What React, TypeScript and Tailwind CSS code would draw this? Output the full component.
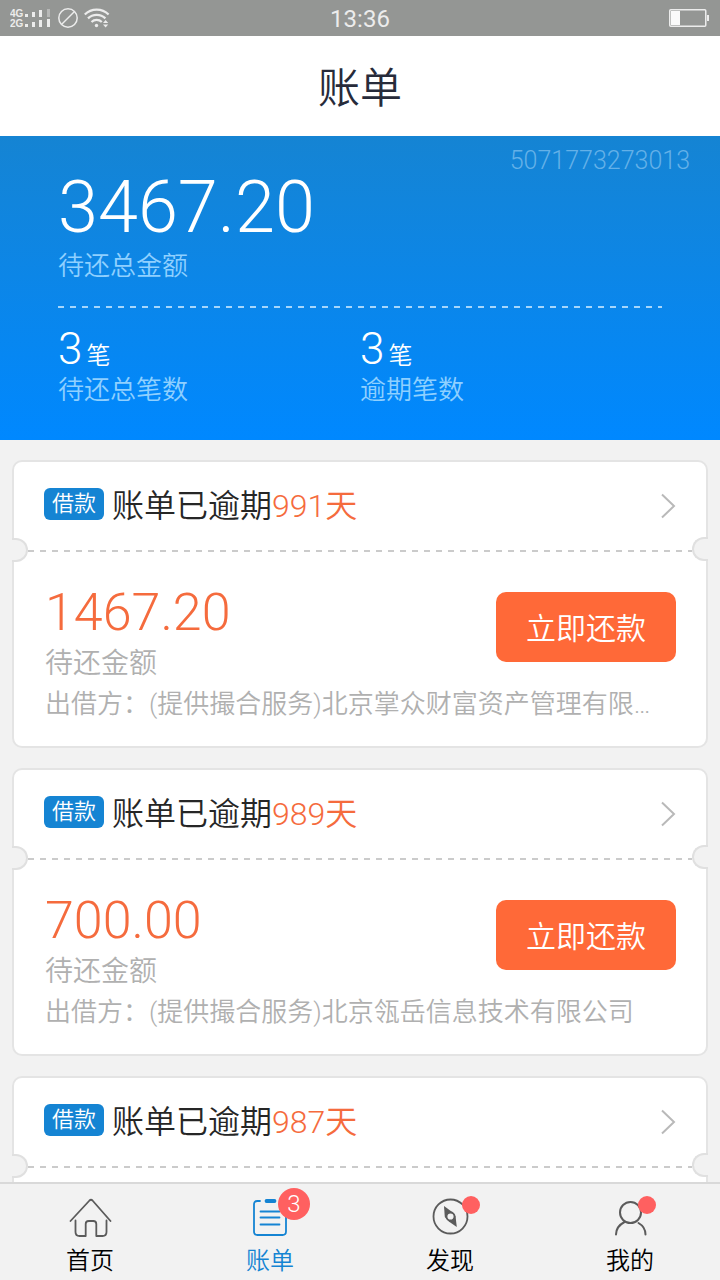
import React from 'react';

interface Bill {
  id: number;
  overdueDays: number;
  amount?: string;
  lender?: string;
}

const BILLS: Bill[] = [
  { id: 1, overdueDays: 991, amount: '1467.20', lender: '(提供撮合服务)北京掌众财富资产管理有限公司' },
  { id: 2, overdueDays: 989, amount: '700.00', lender: '(提供撮合服务)北京瓴岳信息技术有限公司' },
  { id: 3, overdueDays: 987 },
];

const StatusBar = () => (
  <div className="h-9 shrink-0 bg-[#949694] px-2.5 grid grid-cols-3 items-center text-[#ececec]">
    <div className="flex items-center gap-1.5">
      <svg width="42" height="20" viewBox="0 0 42 20" fill="currentColor">
        <text x="0" y="9" fontSize="10" fontWeight="700" fontFamily="Liberation Sans, sans-serif">4G</text>
        <text x="0" y="19" fontSize="10" fontWeight="700" fontFamily="Liberation Sans, sans-serif">2G</text>
        <path d="M15 6h3v3h-3zM22 4h3v5h-3zM29 2h3v7h-3zM15 16h3v3h-3zM22 14h3v5h-3zM29 12h3v7h-3zM37 11h3v8h-3z" />
        <path d="M37 1h3v8h-3z" opacity="0.4" />
      </svg>
      <svg width="20" height="20" viewBox="0 0 20 20" fill="none" stroke="currentColor" strokeWidth="1.5">
        <circle cx="10" cy="10" r="9.2" />
        <path d="M3.5 16.5l13-13" />
      </svg>
      <svg width="26" height="20" viewBox="0 0 26 20" fill="none" stroke="currentColor" strokeWidth="2.2">
        <path d="M0.8 6.5c6.5-6.6 17.2-6.6 23.8 0" />
        <path d="M4 10.4c4.8-4.8 12.6-4.8 17.4 0" />
        <path d="M7.5 14c2.9-2.8 7.4-2.8 10.3 0" />
        <circle cx="12.5" cy="17.5" r="1.7" fill="currentColor" stroke="none" />
        <path d="M19 15l2.6-3 2.6 3zM19 16.4h5.2l-2.6 3z" fill="currentColor" stroke="none" />
      </svg>
    </div>
    <span className="pt-0.5 text-center text-2xl font-normal">13:36</span>
    <svg className="justify-self-end" width="41" height="18" viewBox="0 0 41 18" fill="none">
      <rect x="0.75" y="0.75" width="36" height="16.5" rx="1" stroke="currentColor" strokeWidth="1.5" />
      <rect x="2" y="2" width="9" height="14" fill="#fafafa" />
      <rect x="38" y="6" width="2" height="6" fill="currentColor" />
    </svg>
  </div>
);

const Stat = ({ label, value }: { label: string, value: number }) => (
  <div>
    <p className="text-[44px] leading-[46px]">
      {value}
      <span className="ml-1 text-2xl leading-none">笔</span>
    </p>
    <p className="text-[26px] leading-9 text-[#8fd0ff]">{label}</p>
  </div>
);

const Summary = () => (
  <section className="h-76 shrink-0 bg-linear-to-b from-[#1584d3] to-[#0088ff] text-white">
    <div className="flex justify-between pl-[58px] pr-[30px] pt-3">
      <div className="pt-6">
        <p className="text-7xl">3467.20</p>
        <p className="mt-1 text-[26px] leading-9 text-[#8fd0ff]">待还总金额</p>
      </div>
      <span className="text-[25px] leading-[26px] text-[#64b1e8]">5071773273013</span>
    </div>
    <div className="mx-[58px] mt-[22px] h-0.5 bg-[repeating-linear-gradient(90deg,#a5d6fb_0_6px,transparent_6px_12px)]" />
    <div className="mx-[58px] mt-[18px] grid grid-cols-2">
      <Stat label="待还总笔数" value={3} />
      <Stat label="逾期笔数" value={3} />
    </div>
  </section>
);

const BillCard = ({ bill }: { bill: Bill }) => (
  <article className="min-h-72 shrink-0 rounded-[10px] border-2 border-[#e4e4e4] bg-white">
    <a href={`#bill-${bill.id}`} className="flex h-22 items-center px-[30px]">
      <span className="mb-1 mr-2 rounded-md bg-[#1584d3] px-2 text-[22px] leading-8 text-white">借款</span>
      <span className="flex-1 text-[32px] leading-11 text-[#262626]">
        账单已逾期<span className="text-[#f56b3d]">{bill.overdueDays}天</span>
      </span>
      <svg width="16" height="26" viewBox="0 0 16 26" fill="none" stroke="#b9b9b9" strokeWidth="2">
        <path d="M2 1.5l12 11.5-12 11.5" />
      </svg>
    </a>
    <div className="relative">
      <div className="mx-3.5 h-0.5 bg-[repeating-linear-gradient(90deg,#cbcbcb_0_6px,transparent_6px_12px)]" />
      <span className="absolute -left-0.5 -top-3 h-6 w-4 rounded-r-full border-2 border-l-0 border-[#e0e0e0] bg-[#f2f2f2]" />
      <span className="absolute -right-0.5 -top-[13px] h-6 w-4 rounded-l-full border-2 border-r-0 border-[#e0e0e0] bg-[#f2f2f2]" />
    </div>
    {bill.amount && (
      <div className="pb-[25px] pl-[31px] pr-[30px] pt-[33px]">
        <div className="flex items-start justify-between">
          <div>
            <p className="text-[52px] leading-14 text-[#f56b3d]">{bill.amount}</p>
            <p className="text-[28px] leading-[46px] text-[#b0b0b0]">待还金额</p>
          </div>
          <button className="mt-[7px] rounded-[10px] bg-[#ff6938] px-[30px] pt-1 text-[30px] leading-[66px] text-white">
            立即还款
          </button>
        </div>
        <p className="truncate pr-1 text-[26px] leading-[34px] text-[#b0b0b0]">出借方：{bill.lender}</p>
      </div>
    )}
  </article>
);

const HomeIcon = () => (
  <svg width="44" height="40" viewBox="0 0 44 40" fill="none" stroke="#5b5b5b" strokeWidth="1.8" strokeLinecap="round" strokeLinejoin="round">
    <path d="M2.5 23L21.5 2.5q1.5-1.5 3 0L42.5 23" />
    <path d="M7.5 22.5V34q0 4 4 4h6.2V26q0-3 3-3h4.6q3 0 3 3v12h6.2q4 0 4-4V22.5" />
  </svg>
);

const BillIcon = () => (
  <svg width="44" height="40" viewBox="0 0 44 40" fill="none" stroke="#1584d3" strokeWidth="1.8" strokeLinecap="round">
    <path d="M12 3H9.5q-3.5 0-3.5 3.5v27q0 3.5 3.5 3.5h25q3.5 0 3.5-3.5v-27" />
    <path d="M18.5 3h8" strokeWidth="3.8" />
    <path d="M12.5 13.5h19M12.5 19.5h19M12.5 26.5h19" />
  </svg>
);

const CompassIcon = () => (
  <svg width="52" height="40" viewBox="-4 0 52 40" fill="none" stroke="#5b5b5b" strokeWidth="1.8">
    <circle cx="22.5" cy="18.5" r="17" />
    <path d="M16 8l7.5 5.5 4 4.5 1.3 11-8-5.5-4-4.5z" fill="#5b5b5b" stroke="none" />
    <circle cx="22.5" cy="18.5" r="4" fill="#f2f2f2" />
  </svg>
);

const UserIcon = () => (
  <svg width="44" height="40" viewBox="0 0 44 40" fill="none" stroke="#5b5b5b" strokeWidth="2" strokeLinecap="round">
    <circle cx="22.5" cy="14.5" r="10.5" />
    <path d="M8 36.5q0-8 8.5-12.5M30.5 25q7 4 7 11.5" />
  </svg>
);

const TabItem = ({ icon: Icon, label, active, count, dot }: { icon: React.FC, label: string, active?: boolean, count?: number, dot?: boolean }) => (
  <button className={`flex flex-1 flex-col items-center pt-3.5 ${active ? 'text-[#1584d3]' : 'text-black'}`}>
    <span className="relative">
      <Icon />
      {count && (
        <span className="absolute -right-4.5 -top-2.5 size-8 rounded-full bg-[#ff6060] text-center text-2xl leading-8 text-white">{count}</span>
      )}
      {dot && <span className="absolute -right-1 -top-0.5 size-4.5 rounded-full bg-[#ff6060]" />}
    </span>
    <span className="mt-[5px] text-2xl leading-9">{label}</span>
  </button>
);

const App: React.FC = () => {
  return (
    <div className="flex h-screen flex-col overflow-hidden bg-[#f2f2f2] font-[Roboto,'Noto_Sans_CJK_SC',sans-serif] font-[350]">
      <StatusBar />
      <header className="flex h-25 shrink-0 items-center justify-center bg-white pt-1.5">
        <h1 className="text-[42px] leading-none text-[#272b3a]">账单</h1>
      </header>
      <Summary />
      <main className="flex min-h-0 flex-1 flex-col gap-5 overflow-hidden px-3 pt-5">
        {BILLS.map(bill => <BillCard key={bill.id} bill={bill} />)}
      </main>
      <nav className="flex h-[98px] shrink-0 border-t-2 border-[#d9d9d9] bg-[#f2f2f2]">
        <TabItem icon={HomeIcon} label="首页" />
        <TabItem icon={BillIcon} label="账单" active count={3} />
        <TabItem icon={CompassIcon} label="发现" dot />
        <TabItem icon={UserIcon} label="我的" dot />
      </nav>
    </div>
  );
};

export default App;
